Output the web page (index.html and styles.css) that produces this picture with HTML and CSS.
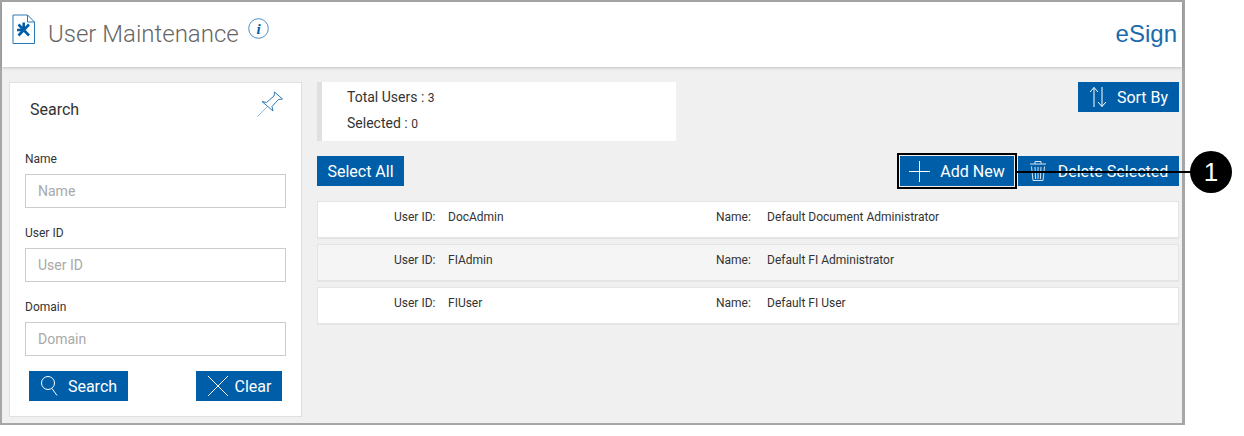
FILE: index.html
```html
<!DOCTYPE html>
<html lang="en">
<head>
    <meta charset="UTF-8">
    <title>User Maintenance</title>
    <link rel="stylesheet" href="styles.css">
</head>
<body>
    <div class="frame">
        <div class="page-header">
            <svg class="doc-icon" width="24" height="31" viewBox="0 0 24 31">
                <path d="M1 1H15.5L22.5 8V29.5H1Z M15.5 1V8H22.5" fill="#fff" stroke="#2a78b5" stroke-width="1"/>
                <path d="M6.5 10.5L17 21.5M17 10.5L6.5 21.5M11.7 8.5V15.5M5 16H11" fill="none" stroke="#005ea8" stroke-width="2.6"/>
            </svg>
            <h1 class="page-title">User Maintenance</h1>
            <svg class="info-icon" width="21" height="21" viewBox="0 0 21 21">
                <circle cx="10.5" cy="10.5" r="9.8" fill="none" stroke="#4a90c4" stroke-width="1"/>
                <text x="10.5" y="15.5" text-anchor="middle" class="info-i">i</text>
            </svg>
            <span class="app-name">eSign</span>
        </div>

        <div class="content">
            <div class="sidebar">
                <div class="sidebar-head">
                    <span class="sidebar-title">Search</span>
                    <svg width="27" height="27" viewBox="0 0 27 27">
                        <path d="M0.5 26.5L10.5 16.5" stroke="#6ea6d3" stroke-width="0.8" fill="none"/>
                        <path d="M5 11.5L9.5 12.5L17 6L17.5 2L25.5 9L21.5 9.5L15 16.5L16 21Z" fill="#fff" stroke="#2a78b5" stroke-width="1"/>
                    </svg>
                </div>
                <div class="field">
                    <label for="name">Name</label>
                    <input type="text" id="name" placeholder="Name">
                </div>
                <div class="field">
                    <label for="userid">User ID</label>
                    <input type="text" id="userid" placeholder="User ID">
                </div>
                <div class="field">
                    <label for="domain">Domain</label>
                    <input type="text" id="domain" placeholder="Domain">
                </div>
                <div class="sidebar-btns">
                    <button class="btn btn-search">
                        <svg width="20" height="24" viewBox="0 0 20 24">
                            <circle cx="8" cy="9" r="6.5" fill="none" stroke="#fff" stroke-width="1"/>
                            <path d="M12 14.5L17 21.5" stroke="#fff" stroke-width="1"/>
                        </svg>
                        Search
                    </button>
                    <button class="btn btn-clear">
                        <svg width="22" height="22" viewBox="0 0 22 22">
                            <path d="M1 1L21 21M21 1L1 21" stroke="#fff" stroke-width="1"/>
                        </svg>
                        Clear
                    </button>
                </div>
            </div>

            <div class="main">
                <div class="summary-row">
                    <div class="summary">
                        <div>Total Users : <small>3</small></div>
                        <div>Selected : <small>0</small></div>
                    </div>
                    <button class="btn btn-sort">
                        <svg width="18" height="22" viewBox="0 0 18 22">
                            <path d="M5 21V1.5M1 6L5 1.5L9 6M13 1V20.5M9 16L13 20.5L17 16" fill="none" stroke="#fff" stroke-width="1"/>
                        </svg>
                        Sort By
                    </button>
                </div>

                <div class="actions">
                    <button class="btn btn-select">Select All</button>
                    <div class="actions-right">
                        <button class="btn btn-add">
                            <svg width="21" height="21" viewBox="0 0 21 21">
                                <path d="M10.5 0V21M0 10.5H21" stroke="#fff" stroke-width="1"/>
                            </svg>
                            Add New
                        </button>
                        <button class="btn btn-delete">
                            <svg width="18" height="22" viewBox="0 0 18 22">
                                <path d="M1 4H17M6 4V1.5H12V4M2.5 6.5L4 20.5H14L15.5 6.5M6 7L6.6 19M9 7V19M12 7L11.4 19" fill="none" stroke="#d5e3ef" stroke-width="1"/>
                            </svg>
                            Delete Selected
                        </button>
                    </div>
                </div>

                <div class="user-list">
                    <div class="user-row">
                        <span class="lbl-id">User ID:</span><span class="val-id">DocAdmin</span>
                        <span class="lbl-name">Name:</span><span>Default Document Administrator</span>
                    </div>
                    <div class="user-row alt">
                        <span class="lbl-id">User ID:</span><span class="val-id">FIAdmin</span>
                        <span class="lbl-name">Name:</span><span>Default FI Administrator</span>
                    </div>
                    <div class="user-row">
                        <span class="lbl-id">User ID:</span><span class="val-id">FIUser</span>
                        <span class="lbl-name">Name:</span><span>Default FI User</span>
                    </div>
                </div>
            </div>
        </div>
    </div>

    <!-- callout over the screenshot -->
    <div class="callout-line"></div>
    <div class="callout-num">1</div>
</body>
</html>
```

FILE: styles.css
```css
body {
    margin: 0;
    background-color: #fff;
    font-family: Roboto, "Liberation Sans", sans-serif;
    color: #333;
    overflow: hidden;
}
.frame {
    width: 1185px;
    height: 425px;
    box-sizing: border-box;
    border: 2px solid #a6a6a6;
    border-right-width: 3px;
    background-color: #f0f0f0;
    display: flex;
    flex-direction: column;
}
.page-header {
    height: 65px;
    flex: none;
    box-sizing: border-box;
    padding: 12px 5px 0 10px;
    background-color: #fff;
    box-shadow: 0 1px 3px rgba(0, 0, 0, 0.2);
    display: flex;
    align-items: flex-start;
}
.page-title {
    margin: 6px 0 0 12px;
    font-size: 24px;
    font-weight: 300;
    line-height: 28px;
    color: #666;
}
.info-icon {
    margin: 4px 0 0 9px;
}
.info-i {
    font-family: "Liberation Serif", serif;
    font-size: 15px;
    font-weight: bold;
    font-style: italic;
    fill: #005ea8;
}
.app-name {
    margin: 6px 0 0 auto;
    font-family: "Liberation Sans", sans-serif;
    font-size: 24px;
    line-height: 28px;
    color: #1a6aad;
    font-weight: normal;
}
.content {
    display: flex;
    padding: 15px 0 0 7px;
}
.sidebar {
    width: 293px;
    height: 335px;
    box-sizing: border-box;
    border: 1px solid #e0e0e0;
    background-color: #fff;
    padding: 0 15px;
}
.sidebar-head {
    height: 69px;
    box-sizing: border-box;
    padding: 7px 2px 0 5px;
    display: flex;
    justify-content: space-between;
}
.sidebar-title {
    margin-top: 10px;
    font-size: 16px;
    line-height: 20px;
}
.field {
    margin-bottom: 18px;
}
.field label {
    display: block;
    font-size: 12px;
    line-height: 15px;
    margin-bottom: 7px;
}
.field input {
    display: block;
    width: 261px;
    height: 34px;
    box-sizing: border-box;
    border: 1px solid #ccc;
    border-width: 1.5px;
    padding: 0 12px;
    font-family: inherit;
    font-size: 14px;
    outline: none;
}
.field input::placeholder {
    color: #a9a9a9;
}
.sidebar-btns {
    display: flex;
    justify-content: space-between;
    margin-top: -3px;
    padding: 0 4px;
}
.btn {
    height: 30px;
    box-sizing: border-box;
    border: none;
    padding: 0;
    background-color: #005ea8;
    color: #fff;
    font-family: inherit;
    font-size: 16px;
    display: flex;
    align-items: center;
    justify-content: center;
    cursor: pointer;
}
.btn-search {
    width: 99px;
    gap: 8px;
}
.btn-clear {
    width: 86px;
    gap: 6px;
}
.main {
    width: 862px;
    margin-left: 15px;
}
.summary-row {
    display: flex;
    justify-content: space-between;
    align-items: flex-start;
}
.summary {
    width: 359px;
    height: 59px;
    box-sizing: border-box;
    border-left: 5px solid #e0e0e0;
    background-color: #fff;
    padding: 3px 0 0 25px;
    font-size: 14px;
    line-height: 25px;
}
.summary small {
    font-size: 12px;
}
.btn-sort {
    width: 101px;
    gap: 10px;
}
.actions {
    display: flex;
    justify-content: space-between;
    margin-top: 15px;
}
.actions-right {
    display: flex;
    gap: 4px;
}
.btn-select {
    width: 87px;
}
.btn-add {
    width: 114px;
    gap: 10px;
    outline: 2px solid #000;
    outline-offset: 1px;
}
.btn-delete {
    width: 161px;
    gap: 11px;
}
.user-list {
    margin-top: 15px;
    display: flex;
    flex-direction: column;
    gap: 5px;
}
.user-row {
    height: 38px;
    box-sizing: border-box;
    border: 1px solid #e4e4e4;
    border-bottom-width: 2px;
    background-color: #fff;
    padding-top: 8px;
    font-size: 12px;
    line-height: 15px;
    display: flex;
}
.user-row.alt {
    background-color: #f5f5f5;
}
.lbl-id {
    margin-left: 76px;
    width: 54px;
}
.val-id {
    width: 268px;
}
.lbl-name {
    width: 51px;
}
.callout-line {
    position: absolute;
    left: 1016px;
    top: 171px;
    width: 180px;
    height: 2px;
    background-color: #000;
}
.callout-num {
    position: absolute;
    left: 1190px;
    top: 151px;
    width: 42px;
    height: 42px;
    border-radius: 50%;
    background-color: #000;
    color: #fff;
    font-family: "Liberation Sans", sans-serif;
    font-size: 26px;
    line-height: 42px;
    text-align: center;
}
```
